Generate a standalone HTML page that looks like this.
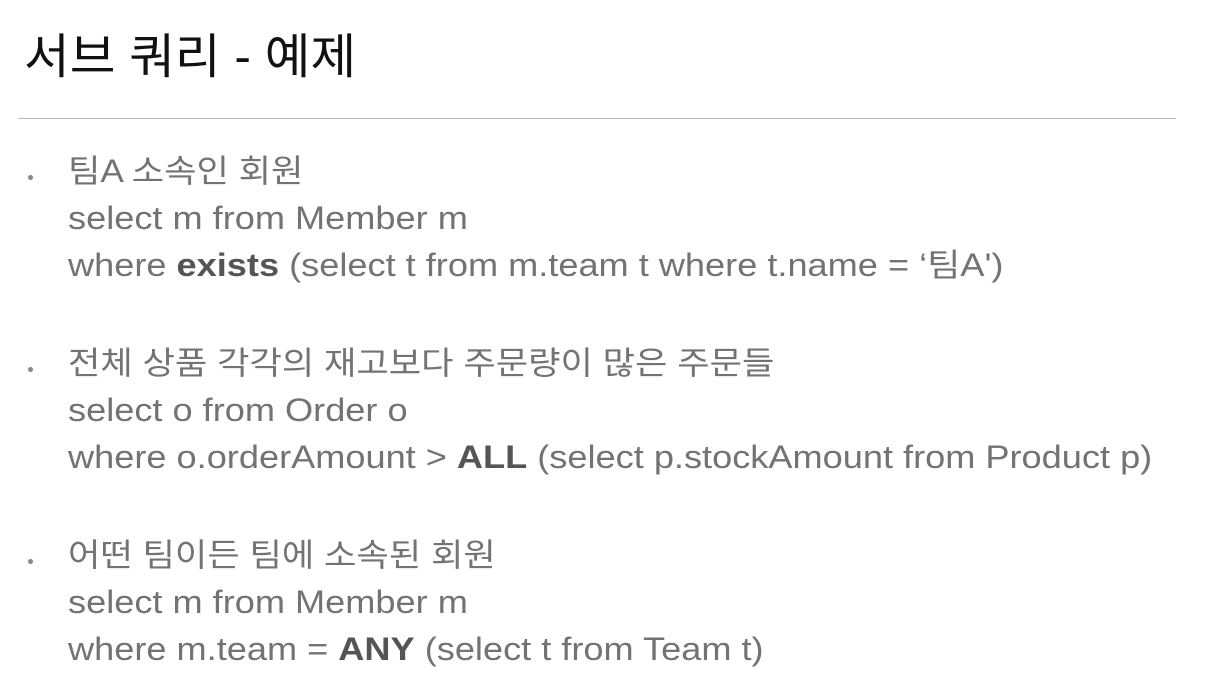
<!DOCTYPE html>
<html><head><meta charset="utf-8"><style>
html,body{margin:0;padding:0;background:#fff;width:1213px;height:695px;overflow:hidden}
body{font-family:"Liberation Sans","Noto Sans CJK KR",sans-serif;position:relative}
.t{position:absolute;left:24px;top:28px;font-size:48px;color:#111;white-space:nowrap;line-height:60px;transform:scaleX(1.035);transform-origin:left}
.hr{position:absolute;left:18px;top:118px;width:1158px;height:1px;background:#b8b8b8}
.l{position:absolute;left:68px;font-size:32px;color:#737373;white-space:nowrap;line-height:40px;transform:scaleX(1.13);transform-origin:left}
.l.k{transform:scaleX(1.10)}
.b{position:absolute;left:28px;width:5px;height:5px;border-radius:50%;background:#888}
b{color:#555}
</style></head><body>
<div class="t">서브 쿼리 - 예제</div>
<div class="hr"></div>
<div class="b" style="top:175px"></div>
<div class="l k" style="top:151px">팀A 소속인 회원</div>
<div class="l" style="top:198px">select m from Member m</div>
<div class="l" style="top:245px">where <b>exists</b> (select t from m.team t where t.name = ‘팀A')</div>
<div class="b" style="top:367px"></div>
<div class="l k" style="top:343px">전체 상품 각각의 재고보다 주문량이 많은 주문들</div>
<div class="l" style="top:390px">select o from Order o</div>
<div class="l" style="top:437px">where o.orderAmount &gt; <b>ALL</b> (select p.stockAmount from Product p)</div>
<div class="b" style="top:559px"></div>
<div class="l k" style="top:535px">어떤 팀이든 팀에 소속된 회원</div>
<div class="l" style="top:582px">select m from Member m</div>
<div class="l" style="top:629px">where m.team = <b>ANY</b> (select t from Team t)</div>
</body></html>
